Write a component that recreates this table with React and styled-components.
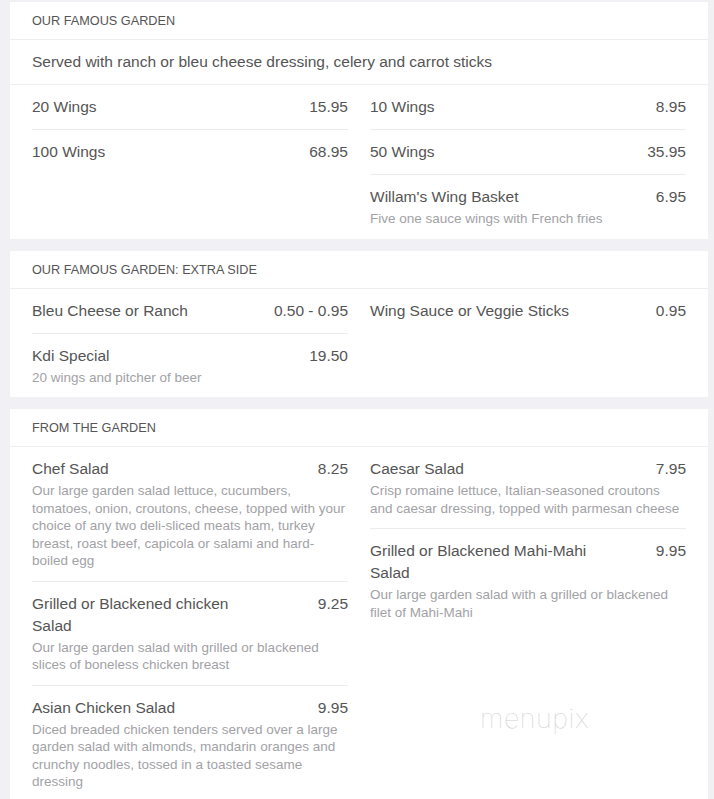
import React from 'react';
import styled, { createGlobalStyle } from 'styled-components';

const Global = createGlobalStyle`
    html, body {
        margin: 0;
        padding: 0;
        background: #f1f1f5;
    }
    body {
        font-family: "Liberation Sans", Arial, sans-serif;
        color: #555;
    }
`;

const Page = styled.div`
    display: flex;
    flex-direction: column;
    gap: 12px;
    padding: 2px 6px 0 10px;
`;

const Card = styled.section`
    position: relative;
    background: #fff;
`;

const Header = styled.h2`
    margin: 0;
    padding: 12px 22px 10px;
    font-size: 12.7px;
    line-height: 15px;
    font-weight: 400;
    text-transform: uppercase;
    color: #555;
    border-bottom: 1px solid #efeff1;
`;

const Note = styled.p`
    margin: 0;
    padding: 11px 22px;
    font-size: 15.5px;
    line-height: 22px;
    color: #555;
    border-bottom: 1px solid #efeff1;
`;

const Columns = styled.div`
    display: grid;
    grid-template-columns: 1fr 1fr;
    column-gap: 22px;
    padding: 0 22px;
    align-items: start;
`;

const Column = styled.div`
    display: flex;
    flex-direction: column;
`;

const Item = styled.div`
    padding: 11px 0;
    border-top: ${p => (p.$first ? 'none' : '1px solid #ececee')};
`;

const ItemTop = styled.div`
    display: flex;
    justify-content: space-between;
    align-items: flex-start;
    gap: 10px;
    font-size: 15.5px;
    line-height: 22px;
    color: #555;
`;

const Name = styled.span`
    flex: 0 1 75%;
`;

const Price = styled.span`
    flex: none;
    text-align: right;
`;

const Desc = styled.div`
    margin-top: 2px;
    padding-right: 2px;
    font-size: 13.5px;
    line-height: 17.5px;
    color: #a2a2a6;
`;

const Watermark = styled.div`
    position: absolute;
    top: 293px;
    left: 470px;
    font-family: Inter, "DejaVu Sans", sans-serif;
    font-weight: 100;
    font-size: 27px;
    letter-spacing: 0.5px;
    color: #cfcfd2;
    pointer-events: none;
`;

const menu = [
    {
        title: 'Our Famous Garden',
        note: 'Served with ranch or bleu cheese dressing, celery and carrot sticks',
        columns: [
            [
                { name: '20 Wings', price: '15.95' },
                { name: '100 Wings', price: '68.95' },
            ],
            [
                { name: '10 Wings', price: '8.95' },
                { name: '50 Wings', price: '35.95' },
                { name: "Willam's Wing Basket", price: '6.95', desc: 'Five one sauce wings with French fries' },
            ],
        ],
    },
    {
        title: 'Our Famous Garden: Extra Side',
        columns: [
            [
                { name: 'Bleu Cheese or Ranch', price: '0.50 - 0.95' },
                { name: 'Kdi Special', price: '19.50', desc: '20 wings and pitcher of beer' },
            ],
            [
                { name: 'Wing Sauce or Veggie Sticks', price: '0.95' },
            ],
        ],
    },
    {
        title: 'From the Garden',
        watermark: true,
        columns: [
            [
                {
                    name: 'Chef Salad',
                    price: '8.25',
                    desc: 'Our large garden salad lettuce, cucumbers, tomatoes, onion, croutons, cheese, topped with your choice of any two deli-sliced meats ham, turkey breast, roast beef, capicola or salami and hard-boiled egg',
                },
                {
                    name: 'Grilled or Blackened chicken Salad',
                    price: '9.25',
                    desc: 'Our large garden salad with grilled or blackened slices of boneless chicken breast',
                },
                {
                    name: 'Asian Chicken Salad',
                    price: '9.95',
                    desc: 'Diced breaded chicken tenders served over a large garden salad with almonds, mandarin oranges and crunchy noodles, tossed in a toasted sesame dressing',
                },
            ],
            [
                {
                    name: 'Caesar Salad',
                    price: '7.95',
                    desc: 'Crisp romaine lettuce, Italian-seasoned croutons and caesar dressing, topped with parmesan cheese',
                },
                {
                    name: 'Grilled or Blackened Mahi-Mahi Salad',
                    price: '9.95',
                    desc: 'Our large garden salad with a grilled or blackened filet of Mahi-Mahi',
                },
            ],
        ],
    },
];

const MenuItem = ({ item, first }) => (
    <Item $first={first}>
        <ItemTop>
            <Name>{item.name}</Name>
            <Price>{item.price}</Price>
        </ItemTop>
        {item.desc && <Desc>{item.desc}</Desc>}
    </Item>
);

const App = () => (
    <>
        <Global />
        <Page>
            {menu.map(section => (
                <Card key={section.title}>
                    <Header>{section.title}</Header>
                    {section.note && <Note>{section.note}</Note>}
                    <Columns>
                        {section.columns.map((col, i) => (
                            <Column key={i}>
                                {col.map((item, j) => (
                                    <MenuItem key={item.name} item={item} first={j === 0} />
                                ))}
                            </Column>
                        ))}
                    </Columns>
                    {section.watermark && <Watermark>menupix</Watermark>}
                </Card>
            ))}
        </Page>
    </>
);

export default App;
